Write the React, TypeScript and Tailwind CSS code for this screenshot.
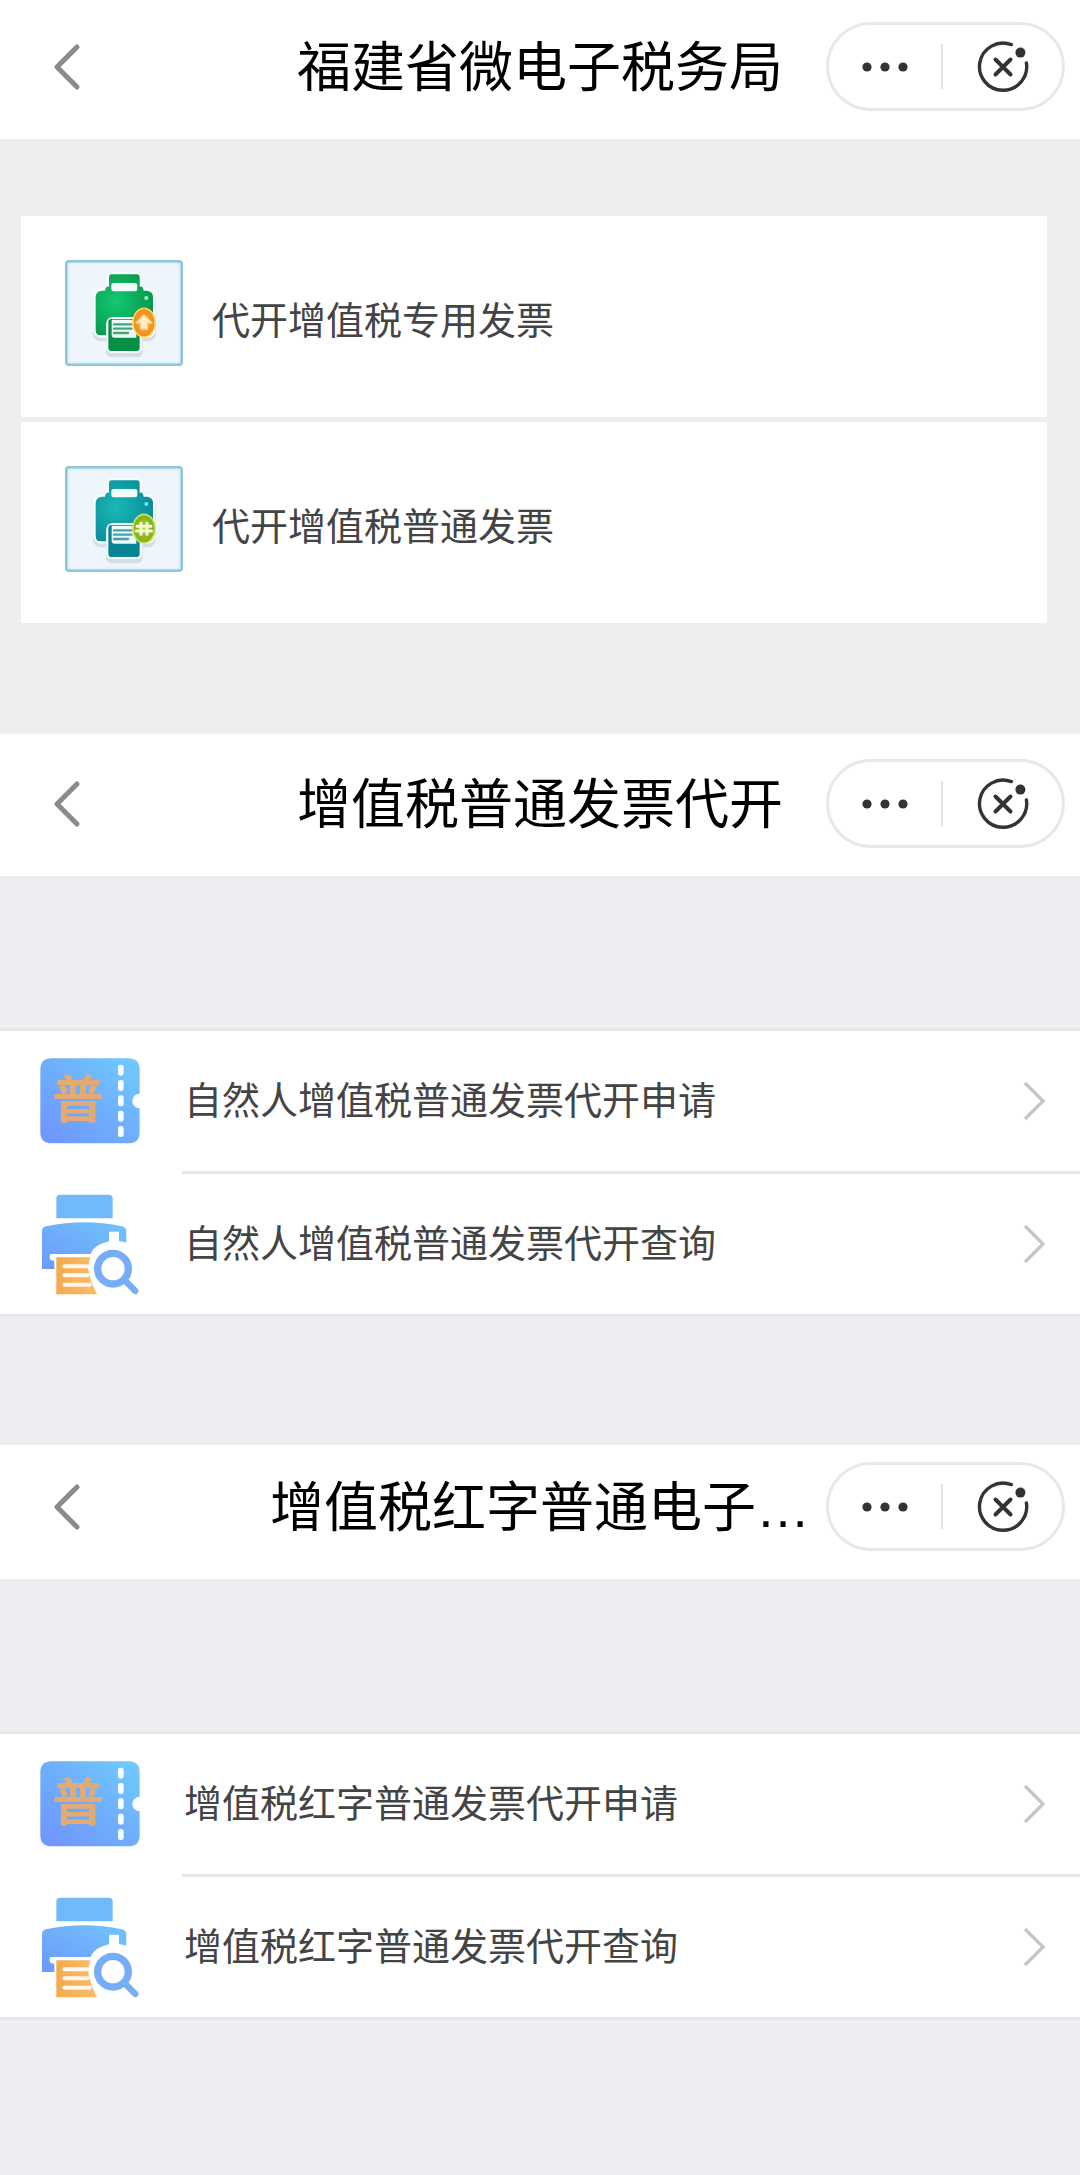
import { useId } from "react";

function BackIcon() {
  return (
    <svg viewBox="0 0 30 50" className="h-[50px] w-[30px]" fill="none" aria-hidden="true">
      <path d="M26 5 6 25l20 20" stroke="#8b8b8b" strokeWidth="5" strokeLinecap="round" strokeLinejoin="round" />
    </svg>
  );
}

function MoreIcon() {
  return (
    <svg viewBox="0 0 46 10" className="h-[10px] w-[46px]" fill="#333333" aria-hidden="true">
      <circle cx="5" cy="5" r="4.6" />
      <circle cx="23" cy="5" r="4.6" />
      <circle cx="41" cy="5" r="4.6" />
    </svg>
  );
}

function CloseIcon() {
  return (
    <svg viewBox="0 0 52 52" className="size-[52px]" fill="none" stroke="#333333" strokeLinecap="round" aria-hidden="true">
      <path d="M34.4 3.6A23.6 23.6 0 1 0 49.4 22" strokeWidth="3.4" />
      <path d="m18.5 18.5 15 15m0-15-15 15" strokeWidth="4" />
      <circle cx="43.4" cy="11.6" r="5" fill="#333333" stroke="none" />
    </svg>
  );
}

function ChevronIcon() {
  return (
    <svg viewBox="0 0 24 40" className="h-10 w-6 shrink-0" fill="none" aria-hidden="true">
      <path d="m3 2 18 18L3 38" stroke="#c6c6c6" strokeWidth="3.4" />
    </svg>
  );
}

type Tone = "green" | "teal";

function PrinterBadgeIcon({ tone }: { tone: Tone }) {
  const id = useId();
  const green = tone === "green";
  const light = green ? "#14c873" : "#19b9b6";
  const dark = green ? "#059045" : "#078594";
  return (
    <svg viewBox="76 61 354 318" className="h-[106px] w-[118px] shrink-0" aria-hidden="true">
      <defs>
        <radialGradient id={id + "p"} cx="0.35" cy="0.45" r="0.75">
          <stop offset="0" stopColor={light} />
          <stop offset="1" stopColor={dark} />
        </radialGradient>
        <radialGradient id={id + "b"}>
          <stop offset="0" stopColor={green ? "#ffb84f" : "#a8cf3c"} />
          <stop offset="1" stopColor={green ? "#ee8618" : "#7fae12"} />
        </radialGradient>
      </defs>
      <rect x="80" y="65" width="346" height="310" rx="7" fill="#eef6fc" stroke="#93c5da" strokeWidth="8" />
      <rect x="87" y="72" width="332" height="296" rx="3" fill="none" stroke="#d9f3fb" strokeWidth="5" />
      <g fill="#d5dfe3" stroke="#d5dfe3" strokeWidth="18" strokeLinejoin="round">
        <rect x="169" y="166" width="170" height="130" rx="14" />
        <rect x="208" y="250" width="92" height="94" rx="8" />
      </g>
      <g fill="#f9fdfd" stroke="#f9fdfd" strokeWidth="16" strokeLinejoin="round">
        <rect x="169" y="154" width="170" height="132" rx="14" />
        <rect x="208" y="106" width="92" height="60" rx="8" />
        <rect x="208" y="240" width="92" height="92" rx="8" />
      </g>
      <path
        d="M216 104h76q8 0 8 9v28q10-4 12 12h10q18 2 18 20v98q0 16-14 16h-26v-30q0-22-18-22h-60q-22 0-22 22v30h-18q-14 0-14-16v-98q0-18 18-20h10q2-14 12-12v-28q0-9 8-9Z"
        fill={"url(#" + id + "p)"}
      />
      <rect x="215" y="130" width="78" height="25" rx="7" fill="#f1fbf8" />
      <circle cx="320" cy="175" r="6" fill={green ? "#a5f5cb" : "#78e5f5"} />
      <path d="M200 287v-34q0-21 21-21h60q20 0 22 21v34" fill="#f1fbf8" />
      <rect x="206" y="238" width="94" height="96" rx="10" fill={dark} />
      <path d="M216 240h74v54h-66q-8 0-8-9Z" fill="#edfaf7" />
      <path d="M223 254h52M223 267h52M223 280h42" stroke={dark} strokeWidth="7" strokeLinecap="round" opacity="0.75" />
      <ellipse cx="313" cy="249" rx="33" ry="43" fill={"url(#" + id + "b)"} stroke={green ? "#ffd45c" : "#c9e36a"} strokeWidth="5" />
      {green ? (
        <path d="m313 226 24 24h-14v18h-20v-18h-14Z" fill="#ffedc6" stroke="#ffd694" strokeWidth="4" strokeLinejoin="round" />
      ) : (
        <path d="M304 232v34M322 232v34M292 242h42M290 256h46" stroke="#f1fad0" strokeWidth="9" strokeLinecap="round" />
      )}
    </svg>
  );
}

function TicketIcon() {
  const id = useId();
  return (
    <svg viewBox="61 113 300 258" className="h-[86px] w-[100px]" aria-hidden="true">
      <defs>
        <linearGradient id={id} x1="0" y1="1" x2="1" y2="0">
          <stop offset="0" stopColor="#6f93ff" />
          <stop offset="0.5" stopColor="#6faefc" />
          <stop offset="1" stopColor="#70ccff" />
        </linearGradient>
      </defs>
      <path
        d="M96 114h230q34 0 34 34v72a22 22 0 0 0 0 44v71q0 34-34 34H96q-34 0-34-34V148q0-34 34-34Z"
        fill={"url(#" + id + ")"}
      />
      <g fill="#f6fcff">
        <rect x="295" y="133" width="17" height="33" rx="7" />
        <rect x="295" y="179" width="17" height="33" rx="7" />
        <rect x="295" y="225" width="17" height="33" rx="7" />
        <rect x="295" y="271" width="17" height="33" rx="7" />
        <rect x="295" y="317" width="17" height="33" rx="7" />
      </g>
      <text x="175" y="294" textAnchor="middle" fontSize="155" fontWeight="700" fill="#e3ab74" className="font-['Noto_Sans_CJK_SC',sans-serif]">
        普
      </text>
    </svg>
  );
}

function PrinterSearchIcon() {
  const id = useId();
  return (
    <svg viewBox="61 520 300 303" className="h-[101px] w-[100px]" aria-hidden="true">
      <defs>
        <linearGradient id={id + "a"} x1="0" y1="1" x2="1" y2="0">
          <stop offset="0" stopColor="#6e98fc" />
          <stop offset="1" stopColor="#70c5fb" />
        </linearGradient>
        <linearGradient id={id + "o"} x1="0" y1="0" x2="1" y2="0">
          <stop offset="0" stopColor="#f5a94d" />
          <stop offset="1" stopColor="#fabd6c" />
        </linearGradient>
      </defs>
      <path d="M122 522h146q11 0 11 11v60H110v-60q0-11 12-11Z" fill="#70bafb" />
      <path
        d="M67 632q0-12 12-15 115-25 228 0 13 3 13 15v34q-10-3-22-5v-28h-30v29q-44 9-55 38H92q-5 9 0 17l12 4v24H67Z"
        fill={"url(#" + id + "a)"}
      />
      <path d="M110 710h102q-12 34 0 62 5 20 20 49H110Z" fill={"url(#" + id + "o)"} />
      <path d="M134 737h69M134 764h69M134 792h76" stroke="#fff8ef" strokeWidth="12" strokeLinecap="round" />
      <circle cx="280" cy="744" r="46" fill="#ffffff" stroke="#75adf7" strokeWidth="22" />
      <path d="m318 782 29 29" stroke="#75adf7" strokeWidth="19" strokeLinecap="round" />
    </svg>
  );
}

function Header({ title, top }: { title: string; top: string }) {
  return (
    <header className={"grid grid-cols-[255px_1fr_255px] items-center bg-white pb-7 " + top}>
      <button type="button" aria-label="返回" className="ml-[51px] justify-self-start">
        <BackIcon />
      </button>
      <h1 className="pt-[3px] text-center text-[54px] leading-[80px] font-normal whitespace-nowrap text-black">{title}</h1>
      <div className="mr-[15px] flex h-[89px] w-[239px] items-center justify-self-end rounded-full border-[3px] border-[#e8e8e8]">
        <button type="button" aria-label="更多" className="flex w-[112px] items-center justify-center">
          <MoreIcon />
        </button>
        <span className="h-[45px] w-[2px] bg-[#e2e2e2]" />
        <button type="button" aria-label="关闭" className="flex flex-1 items-center justify-center">
          <CloseIcon />
        </button>
      </div>
    </header>
  );
}

function InvoiceCard({ label, tone }: { label: string; tone: Tone }) {
  return (
    <a href="#" className="flex items-start gap-[29px] bg-white pt-11 pr-8 pb-[35px] pl-11">
      <PrinterBadgeIcon tone={tone} />
      <span className="text-[38px] leading-[122px] text-[#444444]">{label}</span>
    </a>
  );
}

function ServiceList({ apply, query }: { apply: string; query: string }) {
  const rows = [
    { label: apply, icon: <TicketIcon /> },
    { label: query, icon: <PrinterSearchIcon /> },
  ];
  return (
    <ul className="border-y-[3px] border-[#e6e6e8] bg-white">
      {rows.map((row, i) => (
        <li key={row.label}>
          {i > 0 && <div className="ml-[182px] h-[3px] bg-[#e6e6e8]" />}
          <a href="#" className="flex h-[140px] items-center pr-[34px] pl-10">
            <span className="w-36 shrink-0">{row.icon}</span>
            <span className="flex-1 text-[38px] leading-[56px] text-[#444444]">{row.label}</span>
            <ChevronIcon />
          </a>
        </li>
      ))}
    </ul>
  );
}

export default function App() {
  return (
    <main className="min-h-screen bg-[#eeeef2] font-['Liberation_Sans','Noto_Sans_CJK_SC',sans-serif]">
      <section className="bg-[#eeeeee]">
        <Header title="福建省微电子税务局" top="pt-[22px]" />
        <div className="flex flex-col gap-[5px] pt-[77px] pr-[33px] pb-[111px] pl-[21px]">
          <InvoiceCard label="代开增值税专用发票" tone="green" />
          <InvoiceCard label="代开增值税普通发票" tone="teal" />
        </div>
      </section>
      <section>
        <Header title="增值税普通发票代开" top="pt-[25px]" />
        <div className="pt-[152px] pb-32">
          <ServiceList apply="自然人增值税普通发票代开申请" query="自然人增值税普通发票代开查询" />
        </div>
      </section>
      <section>
        <Header title="增值税红字普通电子…" top="pt-[17px]" />
        <div className="pt-[152px] pb-32">
          <ServiceList apply="增值税红字普通发票代开申请" query="增值税红字普通发票代开查询" />
        </div>
      </section>
    </main>
  );
}
